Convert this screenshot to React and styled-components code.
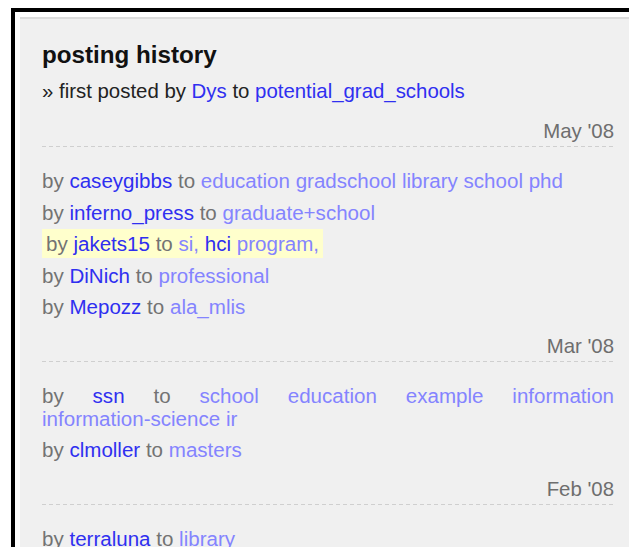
import React from "react";
import styled, { createGlobalStyle } from "styled-components";

const Global = createGlobalStyle`
  html, body { margin: 0; padding: 0; background: #fff; }
  body { font-family: "Liberation Sans", Arial, Helvetica, sans-serif; overflow: hidden; }
`;

const Frame = styled.div`
  margin: 8px 0 0 11px;
  border-top: 4px solid #000;
  border-left: 4px solid #000;
  padding: 5px 0 0 5px;
  background: #fff;
`;

const Panel = styled.section`
  background: #f0f0f0;
  border-top: 2px solid #dcdcdc;
  padding: 22px 15px 40px 22px;
  min-height: 560px;
`;

const Title = styled.h2`
  margin: 0;
  font-size: 24.2px;
  line-height: 28px;
  font-weight: bold;
  color: #111;
`;

const Intro = styled.p`
  margin: 10px 0 16px;
  font-size: 20.4px;
  line-height: 24px;
  color: #222;
`;

const Link = styled.a`
  color: ${(p) => (p.$soft ? "#8484ff" : "#2f2ff0")};
  text-decoration: none;
`;

const Tag = styled(Link)`
  white-space: nowrap;
`;

const Group = styled.div`
  margin-top: 11px;
`;

const DateHead = styled.div`
  font-size: 20.4px;
  line-height: 24px;
  color: #6e6e6e;
  text-align: right;
  padding-bottom: 3px;
`;

const Rule = styled.div`
  height: 1px;
  background-image: repeating-linear-gradient(
    to right,
    #cfcfcf 0 4px,
    transparent 4px 7px
  );
`;

const List = styled.ul`
  list-style: none;
  margin: 18px 0 0;
  padding: 0;
`;

const Row = styled.li`
  font-size: 20.55px;
  line-height: 23px;
  color: #737373;
  text-align: justify;
  padding: ${(p) => (p.$mark ? "3px 4px" : "4.25px 0")};
  margin: ${(p) => (p.$mark ? "1.25px 0" : "0")};
  width: ${(p) => (p.$mark ? "fit-content" : "auto")};
  background: ${(p) => (p.$mark ? "#ffffcc" : "transparent")};
`;

const history = [
  {
    date: "May '08",
    rows: [
      {
        user: "caseygibbs",
        tags: [["education"], ["gradschool"], ["library"], ["school"], ["phd"]],
      },
      { user: "inferno_press", tags: [["graduate+school"]] },
      {
        user: "jakets15",
        mark: true,
        tags: [["si,"], ["hci", true], ["program,"]],
      },
      { user: "DiNich", tags: [["professional"]] },
      { user: "Mepozz", tags: [["ala_mlis"]] },
    ],
  },
  {
    date: "Mar '08",
    rows: [
      {
        user: "ssn",
        tags: [
          ["school"],
          ["education"],
          ["example"],
          ["information"],
          ["information-science"],
          ["ir"],
        ],
      },
      { user: "clmoller", tags: [["masters"]] },
    ],
  },
  {
    date: "Feb '08",
    rows: [{ user: "terraluna", tags: [["library"]] }],
  },
];

function Post({ user, tags, mark }) {
  return (
    <Row $mark={mark}>
      by <Link href="#">{user}</Link> to{" "}
      {tags.map(([t, strong], i) => (
        <React.Fragment key={i}>
          {i > 0 && " "}
          <Tag href="#" $soft={!strong}>
            {t}
          </Tag>
        </React.Fragment>
      ))}
    </Row>
  );
}

export default function App() {
  return (
    <>
      <Global />
      <Frame>
        <Panel>
          <Title>posting history</Title>
          <Intro>
            » first posted by <Link href="#">Dys</Link> to{" "}
            <Link href="#">potential_grad_schools</Link>
          </Intro>
          {history.map((g) => (
            <Group key={g.date}>
              <DateHead>{g.date}</DateHead>
              <Rule />
              <List>
                {g.rows.map((r) => (
                  <Post key={r.user} {...r} />
                ))}
              </List>
            </Group>
          ))}
        </Panel>
      </Frame>
    </>
  );
}
